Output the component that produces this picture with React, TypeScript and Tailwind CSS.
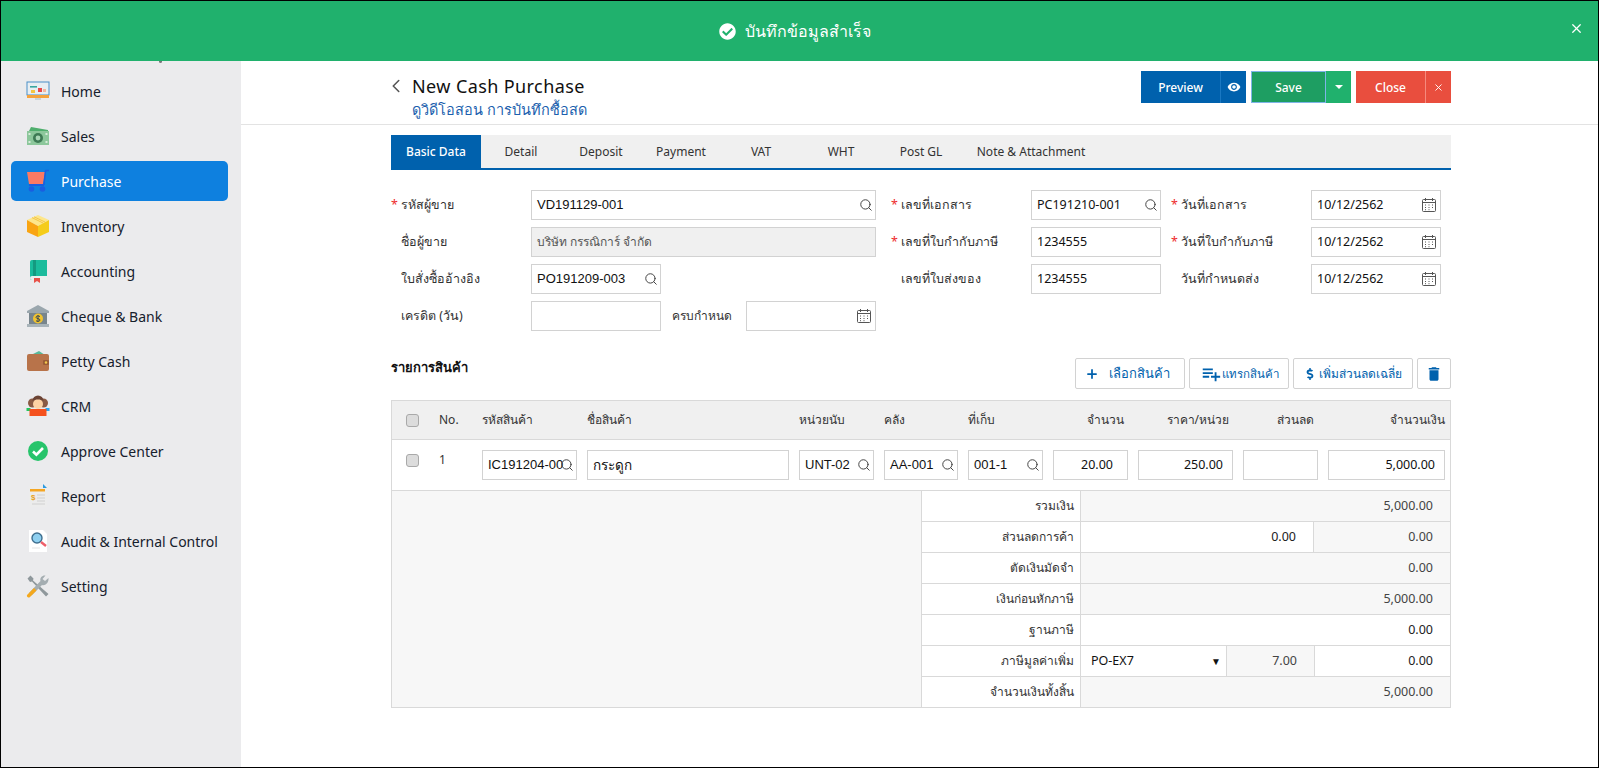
import { Plus, Search, X, ChevronLeft } from "lucide-react"
import { FaCheckCircle, FaDollarSign } from "react-icons/fa"
import { MdDelete, MdPlaylistAdd, MdVisibility } from "react-icons/md"
import type { ReactNode } from "react"

const ui = "font-['Noto_Sans','Open_Sans',sans-serif]"
const arial = "font-['Liberation_Sans','Noto_Sans',sans-serif]"

function CalendarIcon() {
  return (
    <svg viewBox="0 0 16 16" className="h-[16px] w-[16px] text-[#555]" fill="none" stroke="currentColor">
      <rect x="1.5" y="2.5" width="13" height="12" rx="1" />
      <path d="M1.5 5.5h13M4.5 1v3M11.5 1v3" />
      <path d="M4 8h1M7.5 8h1M11 8h1M4 10.5h1M7.5 10.5h1M11 10.5h1M4 12.7h1M7.5 12.7h1" />
    </svg>
  )
}

function HomeIcon() {
  return (
    <svg viewBox="0 0 24 20" className="h-[20px] w-[24px]">
      <rect x="1" y="1" width="22" height="13" fill="#e8eef2" stroke="#4a90c8" />
      <rect x="1" y="14" width="22" height="3" fill="#f5a33d" />
      <rect x="9" y="17" width="6" height="2" fill="#c9d3da" />
      <rect x="4" y="5" width="7" height="1.6" fill="#3aa6a0" />
      <rect x="5" y="9" width="4" height="3" fill="#f4c542" />
      <rect x="12" y="7" width="4" height="4" fill="#e84a4a" />
      <rect x="17" y="8" width="3" height="3" fill="#f2b6a0" />
    </svg>
  )
}

function SalesIcon() {
  return (
    <svg viewBox="0 0 24 20" className="h-[20px] w-[24px]">
      <path d="M3 5 L5 1 L22 4 L22 8 Z" fill="#4fae6d" />
      <rect x="1" y="5" width="22" height="14" fill="#8cc79b" />
      <circle cx="12" cy="12" r="5" fill="#3d7a54" />
      <circle cx="12" cy="12" r="2.4" fill="#a9d6b5" />
      <rect x="2.5" y="7" width="2" height="2" fill="#d6ecd9" />
      <rect x="19.5" y="15" width="2" height="2" fill="#d6ecd9" />
      <rect x="2.5" y="15" width="2" height="2" fill="#d6ecd9" />
      <rect x="19.5" y="7" width="2" height="2" fill="#d6ecd9" />
    </svg>
  )
}

function PurchaseIcon() {
  return (
    <svg viewBox="0 0 24 24" className="h-[24px] w-[24px]">
      <path d="M1 3h18l-2 12H3z" fill="#fb7a63" />
      <path d="M19 3l1-1.5h3" stroke="#1a5ee0" strokeWidth="1.5" fill="none" />
      <path d="M3 15h15v2H3z" fill="#1a5ee0" />
      <path d="M19.5 2l-1.6 14" stroke="#1a5ee0" strokeWidth="1.5" />
      <circle cx="5.5" cy="20" r="2.8" fill="#1a5ee0" />
      <circle cx="16.5" cy="20" r="2.8" fill="#1a5ee0" />
    </svg>
  )
}

function InventoryIcon() {
  return (
    <svg viewBox="0 0 24 24" className="h-[24px] w-[24px]">
      <path d="M12 1l11 5-11 6L1 6z" fill="#fde68a" />
      <path d="M1 6l11 6v11L1 18z" fill="#f9a412" />
      <path d="M23 6l-11 6v11l11-5z" fill="#f5cc1a" />
      <path d="M6 3.6l11 5.4M8 2.8l11 5.2" stroke="#f3c64a" strokeWidth="1" />
    </svg>
  )
}

function AccountingIcon() {
  return (
    <svg viewBox="0 0 20 24" className="h-[24px] w-[20px]">
      <path d="M2 3a2 2 0 012-2h15v20H4a2 2 0 01-2-2z" fill="#1abc9c" />
      <path d="M2 19a2 2 0 012-2h15v4H4a2 2 0 01-2-2z" fill="#e8f2ee" />
      <path d="M5 1h3v16H5z" fill="#149a80" />
      <path d="M6 19h6v5l-3-2-3 2z" fill="#e8524a" />
    </svg>
  )
}

function BankIcon() {
  return (
    <svg viewBox="0 0 24 24" className="h-[24px] w-[24px]">
      <path d="M12 1L23 7v2H1V7z" fill="#9aa6ad" />
      <rect x="3" y="9" width="18" height="11" fill="#78858d" />
      <rect x="1" y="20" width="22" height="3" fill="#a8b3b9" />
      <circle cx="12" cy="14.5" r="5" fill="#f0c330" />
      <path d="M14 12.6c-1-1-4-1-4 .7s4 1 4 2.7-3 1.7-4 .7M12 11v7" stroke="#3c4a52" strokeWidth="1" fill="none" />
    </svg>
  )
}

function WalletIcon() {
  return (
    <svg viewBox="0 0 24 22" className="h-[22px] w-[24px]">
      <path d="M5 5l8-4 6 4z" fill="#57b99a" />
      <rect x="1" y="4" width="22" height="17" rx="2" fill="#b8734a" />
      <rect x="17" y="10" width="6" height="5" rx="1" fill="#9a5c37" />
      <circle cx="20" cy="12.5" r="1.2" fill="#f2c94c" />
    </svg>
  )
}

function CrmIcon() {
  return (
    <svg viewBox="0 0 24 22" className="h-[22px] w-[24px]">
      <circle cx="6.5" cy="8" r="4.5" fill="#8a5a44" />
      <circle cx="17.5" cy="8" r="4.5" fill="#8a5a44" />
      <rect x="0.5" y="13" width="4" height="3" fill="#22c55e" />
      <rect x="19.5" y="13" width="4" height="3" fill="#2aa9f5" />
      <path d="M3.5 14h17v7h-17z" fill="#f4511e" />
      <circle cx="12" cy="9" r="5" fill="#fdd2a4" />
      <path d="M6.5 6a5.5 5.5 0 0111 0c-3-2-8-2-11 0z" fill="#6b4334" />
    </svg>
  )
}

function ApproveIcon() {
  return (
    <svg viewBox="0 0 20 20" className="h-[20px] w-[20px]">
      <circle cx="10" cy="10" r="10" fill="#27c46b" />
      <path d="M5 10.5l3.4 3.2L15 7" stroke="#fff" strokeWidth="2.6" fill="none" />
    </svg>
  )
}

function ReportIcon() {
  return (
    <svg viewBox="0 0 20 24" className="h-[24px] w-[20px]">
      <rect x="1" y="2" width="18" height="21" fill="#ececec" />
      <rect x="2" y="5" width="15" height="2.5" fill="#f5a623" />
      <path d="M15 0l4 4h-4z" fill="#2d9be0" />
      <text x="3" y="16" fontSize="8" fontWeight="700" fill="#e8a21d" fontFamily="Liberation Sans">$</text>
      <path d="M9 11h8M9 14h8M9 17h8M4 20h13" stroke="#cfcfcf" strokeWidth="1.2" />
    </svg>
  )
}

function AuditIcon() {
  return (
    <svg viewBox="0 0 20 24" className="h-[24px] w-[20px]">
      <path d="M1 1h14l4 4v18H1z" fill="#fff" />
      <circle cx="9" cy="9" r="5" fill="#8fd0f0" stroke="#3f6f8f" strokeWidth="1.4" />
      <path d="M13 13l5 4" stroke="#ee5f6a" strokeWidth="2.4" />
      <path d="M4 19h8" stroke="#e3e3e3" />
    </svg>
  )
}

function SettingIcon() {
  return (
    <svg viewBox="0 0 24 24" className="h-[24px] w-[24px]">
      <path d="M1.5 4.5l3-3 3 3-.5 2 15.5 13.5-2.5 2.5L6 7.5l-2 .5z" fill="#8f989c" />
      <path d="M22.5 4l-3.5 3-2.5-2 3-3.500c-3-.5-6 2-5 5.500L3 19l2.500 2.500L16 11c3 1 7-2 6.500-7z" fill="#a4adb1" />
      <path d="M1.500 20.500l6.500-6.500 2.500 2.500-6.500 6.500a1.700 1.700 0 01-2.500-2.500z" fill="#f4a81d" />
    </svg>
  )
}

const menu: { label: string; icon: ReactNode; active?: boolean }[] = [
  { label: "Home", icon: <HomeIcon /> },
  { label: "Sales", icon: <SalesIcon /> },
  { label: "Purchase", icon: <PurchaseIcon />, active: true },
  { label: "Inventory", icon: <InventoryIcon /> },
  { label: "Accounting", icon: <AccountingIcon /> },
  { label: "Cheque & Bank", icon: <BankIcon /> },
  { label: "Petty Cash", icon: <WalletIcon /> },
  { label: "CRM", icon: <CrmIcon /> },
  { label: "Approve Center", icon: <ApproveIcon /> },
  { label: "Report", icon: <ReportIcon /> },
  { label: "Audit & Internal Control", icon: <AuditIcon /> },
  { label: "Setting", icon: <SettingIcon /> },
]

function Sidebar() {
  return (
    <aside className={`relative w-[240px] shrink-0 bg-[#ebebed] pt-[10px] pr-[13px] pl-[10px] ${ui}`}>
      <span className="absolute top-0 left-[158px] h-[2px] w-[3px] rounded-b-full bg-[#777]" />
      {menu.map((m) => (
        <div
          key={m.label}
          className={`mb-[5px] flex h-[40px] items-center rounded-[5px] ${m.active ? "bg-[#0e80df] text-white" : "text-[#16202c]"}`}
        >
          <span className="flex w-[50px] justify-center pl-[4px]">{m.icon}</span>
          <span className="text-[14px]">{m.label}</span>
        </div>
      ))}
    </aside>
  )
}

function Field({
  value,
  icon,
  readOnly,
  className,
  align,
  font,
}: {
  value?: string
  icon?: "search" | "calendar"
  readOnly?: boolean
  className?: string
  align?: "right"
  font?: string
}) {
  return (
    <div
      className={`relative flex h-[30px] items-center overflow-hidden border border-[#d2d2d2] pl-[5px] ${readOnly ? "bg-[#f0f0f0] text-[#555]" : "bg-white text-[#111]"} ${align === "right" ? "justify-end pr-[9px]" : ""} ${font ?? `${arial} text-[13px]`} ${className ?? ""}`}
    >
      <span className="whitespace-nowrap">{value}</span>
      {icon === "search" && (
        <span className="absolute right-[2px] flex h-[14px] w-[14px] items-center justify-center">
          <Search size={14} color="#444" strokeWidth={1.7} />
        </span>
      )}
      {icon === "calendar" && (
        <span className="absolute right-[3px] flex">
          <CalendarIcon />
        </span>
      )}
    </div>
  )
}

function Label({ text, required, className }: { text: string; required?: boolean; className?: string }) {
  return (
    <div className={`flex h-[30px] items-center text-[12.5px] text-[#333] ${ui} ${className ?? ""}`}>
      <span className="w-[10px] text-[#ee2b2b]">{required ? "*" : ""}</span>
      <span>{text}</span>
    </div>
  )
}

function HeadCell({ children, className }: { children?: ReactNode; className?: string }) {
  return <div className={`px-[5px] text-[12px] text-[#333] ${ui} ${className ?? ""}`}>{children}</div>
}

function Check() {
  return <input type="checkbox" className="h-[13px] w-[13px] appearance-none rounded-[3px] border border-[#a9a9a9] bg-[#dcdcdc]" />
}

const tabs = ["Detail", "Deposit", "Payment", "VAT", "WHT", "Post GL"]

const colGrid = "grid grid-cols-[37px_48px_105px_212px_85px_84px_85px_85px_105px_85px_1fr]"

const uiField = `${ui} text-[12.5px]`

function SummaryRow({ label, children }: { label: string; children: ReactNode }) {
  return (
    <div className="flex h-[31px] border-b border-[#d9d9d9] last:h-[30px] last:border-b-0">
      <div className={`flex w-[159px] shrink-0 items-center justify-end border-r border-[#d9d9d9] pr-[6px] text-[12px] text-[#333] ${ui}`}>
        {label}
      </div>
      {children}
    </div>
  )
}

function Val({ v, gray, className }: { v?: string; gray?: boolean; className?: string }) {
  return (
    <div
      className={`flex items-center justify-end pr-[17px] text-[12.5px] ${gray ? "bg-[#f7f7f7] text-[#444]" : "bg-white text-[#222]"} ${ui} ${className ?? "flex-1"}`}
    >
      {v}
    </div>
  )
}

export default function App() {
  return (
    <div className="flex h-[768px] w-[1599px] flex-col overflow-hidden border border-black bg-white">
      <div className="relative flex h-[60px] shrink-0 items-center justify-center bg-[#20b16d] pr-[10px] text-white">
        <FaCheckCircle size={17} className="mr-[9px]" />
        <span className={`text-[16px] ${ui}`}>บันทึกข้อมูลสำเร็จ</span>
        <X size={15} className="absolute top-[20px] right-[14px]" />
      </div>

      <div className="flex min-h-0 flex-1">
        <Sidebar />

        <main className="min-w-0 flex-1">
          <header className="border-b border-[#e3e3e3]">
            <div className="mr-[147px] ml-[150px] flex h-[63px] items-start justify-between pt-[10px]">
              <div className="flex pt-[1px]">
                <ChevronLeft size={22} color="#555" strokeWidth={1.7} className="mt-[3px] -ml-[6px] mr-[5px]" />
                <div>
                  <div className={`text-[18px] leading-[28px] tracking-[0.4px] text-[#111] ${ui}`}>New Cash Purchase</div>
                  <div className={`mt-[1px] text-[14.5px] leading-[16px] text-[#1c5fae] ${ui}`}>ดูวิดีโอสอน การบันทึกซื้อสด</div>
                </div>
              </div>
              <div className={`flex text-[12px] font-medium text-white ${ui}`}>
                <button className="flex h-[32px] w-[79px] items-center justify-center bg-[#0061ad] pt-[1px]">Preview</button>
                <button className="flex h-[32px] w-[26px] items-center justify-center border-l border-[#1a78c2] bg-[#0061ad]">
                  <MdVisibility size={14} />
                </button>
                <button className="ml-[5px] flex h-[32px] w-[75px] items-center justify-center border border-[#7fb4e8] bg-[#1e9e62] pt-[1px]">Save</button>
                <button className="flex h-[32px] w-[25px] items-center justify-center bg-[#20b16d]">
                  <span className="border-x-[4px] border-t-[4px] border-x-transparent border-t-white" />
                </button>
                <button className="ml-[5px] flex h-[32px] w-[69px] items-center justify-center bg-[#e94e3e] pt-[1px]">Close</button>
                <button className="flex h-[32px] w-[26px] items-center justify-center border-l border-[#f58a7e] bg-[#e94e3e]">
                  <X size={11} />
                </button>
              </div>
            </div>
          </header>

          <div className="mr-[147px] ml-[150px] pt-[10px]">
            <div className={`flex h-[35px] border-b-2 border-[#0061ad] bg-[#f0f0f0] text-[12px] text-[#333] ${ui}`}>
              <div className="flex w-[90px] items-center justify-center bg-[#0061ad] font-medium text-white">Basic Data</div>
              {tabs.map((t) => (
                <div key={t} className="flex w-[80px] items-center justify-center">
                  {t}
                </div>
              ))}
              <div className="flex w-[140px] items-center justify-center">Note &amp; Attachment</div>
            </div>

            <div className="mt-[20px] grid grid-cols-[140px_130px_85px_130px_155px_130px_150px_130px] gap-y-[7px]">
              <Label text="รหัสผู้ขาย" required />
              <Field value="VD191129-001" icon="search" className="col-span-3" />
              <Label text="เลขที่เอกสาร" required className="pl-[15px]" />
              <Field value="PC191210-001" icon="search" font={uiField} />
              <Label text="วันที่เอกสาร" required className="pl-[10px]" />
              <Field value="10/12/2562" icon="calendar" font={uiField} />

              <Label text="ชื่อผู้ขาย" />
              <Field value="บริษัท กรรณิการ์ จำกัด" readOnly className="col-span-3" font={`${ui} text-[12px]`} />
              <Label text="เลขที่ใบกำกับภาษี" required className="pl-[15px]" />
              <Field value="1234555" font={uiField} />
              <Label text="วันที่ใบกำกับภาษี" required className="pl-[10px]" />
              <Field value="10/12/2562" icon="calendar" font={uiField} />

              <Label text="ใบสั่งซื้ออ้างอิง" />
              <Field value="PO191209-003" icon="search" />
              <div className="col-span-2" />
              <Label text="เลขที่ใบส่งของ" className="pl-[15px]" />
              <Field value="1234555" font={uiField} />
              <Label text="วันที่กำหนดส่ง" className="pl-[10px]" />
              <Field value="10/12/2562" icon="calendar" font={uiField} />

              <Label text="เครดิต (วัน)" />
              <Field />
              <div className={`flex h-[30px] items-center pl-[11px] text-[12px] text-[#333] ${ui}`}>ครบกำหนด</div>
              <Field icon="calendar" />
            </div>

            <div className="mt-[27px] flex items-start justify-between">
              <div className={`text-[13px] font-bold text-[#111] ${ui}`}>รายการสินค้า</div>
              <div className={`flex gap-[4px] text-[12px] text-[#0061ad] ${ui}`}>
                <button className="flex h-[31px] w-[110px] items-center justify-center gap-[10px] rounded-[2px] border border-[#d2d2d2] pr-[6px] text-[13px]">
                  <Plus size={14} strokeWidth={3} />
                  เลือกสินค้า
                </button>
                <button className="flex h-[31px] w-[100px] items-center justify-center rounded-[2px] border border-[#d2d2d2] text-[11.5px]">
                  <MdPlaylistAdd size={22} />
                  แทรกสินค้า
                </button>
                <button className="flex h-[31px] w-[120px] items-center justify-center gap-[3px] rounded-[2px] border border-[#d2d2d2]">
                  <FaDollarSign size={12} />
                  เพิ่มส่วนลดเฉลี่ย
                </button>
                <button className="flex h-[31px] w-[34px] items-center justify-center rounded-[2px] border border-[#d2d2d2]">
                  <MdDelete size={18} />
                </button>
              </div>
            </div>

            <div className="mt-[11px] border border-[#d9d9d9]">
              <div className={`${colGrid} h-[39px] items-center border-b border-[#d9d9d9] bg-[#f0f0f0]`}>
                <div className="flex justify-center pl-[3px]"><Check /></div>
                <HeadCell className="pl-[10px]">No.</HeadCell>
                <HeadCell className="pl-[5px]">รหัสสินค้า</HeadCell>
                <HeadCell>ชื่อสินค้า</HeadCell>
                <HeadCell>หน่วยนับ</HeadCell>
                <HeadCell>คลัง</HeadCell>
                <HeadCell>ที่เก็บ</HeadCell>
                <HeadCell className="pr-[9px] text-right">จำนวน</HeadCell>
                <HeadCell className="pr-[9px] text-right">ราคา/หน่วย</HeadCell>
                <HeadCell className="pr-[9px] text-right">ส่วนลด</HeadCell>
                <HeadCell className="text-right">จำนวนเงิน</HeadCell>
              </div>
              <div className={`${colGrid} h-[51px] items-start border-b border-[#d9d9d9] pt-[10px]`}>
                <div className="flex justify-center pt-[4px] pl-[3px]"><Check /></div>
                <div className={`pt-[1px] pl-[10px] text-[12px] text-[#333] ${ui}`}>1</div>
                <div className="px-[5px]"><Field value="IC191204-00" icon="search" /></div>
                <div className="px-[5px]"><Field value="กระดูก" font={`${ui} text-[13.5px]`} /></div>
                <div className="px-[5px]"><Field value="UNT-02" icon="search" /></div>
                <div className="px-[5px]"><Field value="AA-001" icon="search" /></div>
                <div className="px-[5px]"><Field value="001-1" icon="search" /></div>
                <div className="px-[5px]"><Field value="20.00" align="right" font={uiField} className="pr-[14px]!" /></div>
                <div className="px-[5px]"><Field value="250.00" align="right" font={uiField} /></div>
                <div className="px-[5px]"><Field align="right" /></div>
                <div className="px-[5px]"><Field value="5,000.00" align="right" font={uiField} /></div>
              </div>
              <div className="flex">
                <div className="w-[530px] shrink-0 border-r border-[#d9d9d9] bg-[#f7f7f7]" />
                <div className="flex-1">
                  <SummaryRow label="รวมเงิน"><Val v="5,000.00" gray /></SummaryRow>
                  <SummaryRow label="ส่วนลดการค้า">
                    <Val v="0.00" className="w-[233px] border-r border-[#d9d9d9]" />
                    <Val v="0.00" gray />
                  </SummaryRow>
                  <SummaryRow label="ตัดเงินมัดจำ"><Val v="0.00" gray /></SummaryRow>
                  <SummaryRow label="เงินก่อนหักภาษี"><Val v="5,000.00" gray /></SummaryRow>
                  <SummaryRow label="ฐานภาษี"><Val v="0.00" /></SummaryRow>
                  <SummaryRow label="ภาษีมูลค่าเพิ่ม">
                    <div className={`flex w-[146px] items-center justify-between border-r border-[#d9d9d9] pr-[5px] pl-[10px] text-[12.5px] text-[#111] ${ui}`}>
                      <span>PO-EX7</span>
                      <span className="text-[10px]">▼</span>
                    </div>
                    <Val v="7.00" gray className="w-[88px] border-r border-[#d9d9d9]" />
                    <Val v="0.00" />
                  </SummaryRow>
                  <SummaryRow label="จำนวนเงินทั้งสิ้น"><Val v="5,000.00" gray /></SummaryRow>
                </div>
              </div>
            </div>
          </div>
        </main>
      </div>
    </div>
  )
}
